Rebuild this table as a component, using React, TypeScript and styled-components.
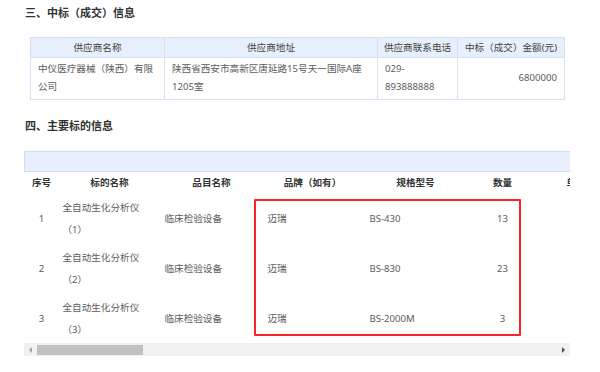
import React from "react"
import styled, { createGlobalStyle } from "styled-components"

const GlobalStyle = createGlobalStyle`
  body {
    margin: 0;
    background: #ffffff;
    font-family: "Noto Sans", "Noto Sans CJK SC", sans-serif;
  }
`

const Page = styled.div`
  width: 600px;
  height: 372px;
  overflow: hidden;
  padding: 5px 0 0 24px;
  box-sizing: border-box;
`

const SectionTitle: any = styled.h3`
  margin: ${(props: any) => props.top || 0}px 0 0 1px;
  font-size: 11px;
  line-height: 16px;
  font-weight: 700;
  color: #333333;
`

const Col: any = styled.col`
  width: ${(props: any) => props.w}px;
`

const InfoTable = styled.table`
  margin: 16px 0 0 6px;
  width: 534px;
  border-collapse: collapse;
  table-layout: fixed;
  font-size: 9.6px;
  color: #5c5c5c;

  th,
  td {
    border: 1px solid #d3e2f4;
    box-sizing: border-box;
  }

  th {
    height: 20px;
    padding: 0 4px;
    line-height: 18px;
    font-weight: 400;
    color: #444444;
    background: #e6effb;
    text-align: center;
    white-space: nowrap;
  }
`

const InfoCell: any = styled.td`
  height: 41px;
  padding: 2px 7px 3px;
  line-height: 18px;
  text-align: ${(props: any) => (props.right ? "right" : "left")};
  vertical-align: middle;
`

const ScrollArea = styled.div`
  position: relative;
  margin: 17px 0 0 0;
  width: 546px;
`

const Clip = styled.div`
  width: 546px;
  overflow: hidden;
`

const ItemTable = styled.table`
  width: 620px;
  border-collapse: collapse;
  table-layout: fixed;
  font-size: 9.6px;
  color: #5c5c5c;
`

const BlueBar = styled.td`
  height: 20px;
  padding: 0;
  background: #e6effb;
  border: 1px solid #cddff3;
  box-sizing: border-box;
`

const HeadCell = styled.th`
  height: 22px;
  padding: 0;
  font-weight: 700;
  color: #333333;
  text-align: center;
  white-space: nowrap;
  line-height: 16px;
`

const ItemCell: any = styled.td`
  height: 50px;
  padding: 0 4px 0 ${(props: any) => props.pl ?? 4}px;
  line-height: 22px;
  text-align: ${(props: any) => props.align || "left"};
  vertical-align: middle;
  box-sizing: border-box;
`

const Highlight = styled.div`
  position: absolute;
  left: 230px;
  top: 48px;
  width: 267px;
  height: 137px;
  border: 2px solid #ff2323;
  border-radius: 1px;
  box-sizing: border-box;
  pointer-events: none;
`

const ScrollBar = styled.div`
  display: flex;
  align-items: center;
  width: 546px;
  height: 13px;
  margin-top: -1px;
  background: #f1f1f1;
`

const Arrow: any = styled.div`
  flex: none;
  width: 13px;
  height: 13px;
  display: flex;
  align-items: center;
  justify-content: center;

  &::before {
    content: "";
    width: 0;
    height: 0;
    border-top: 3px solid transparent;
    border-bottom: 3px solid transparent;
    ${(props: any) =>
      props.dir === "left"
        ? "border-right: 3px solid #a3a3a3;"
        : "border-left: 3px solid #505050;"}
  }
`

const Track = styled.div`
  flex: 1;
  height: 13px;
  display: flex;
  align-items: center;
`

const Thumb = styled.div`
  width: 106px;
  height: 10px;
  background: #c1c1c1;
`

const items = [
  { no: 1, name: "全自动生化分析仪（1）", model: "BS-430", qty: 13 },
  { no: 2, name: "全自动生化分析仪（2）", model: "BS-830", qty: 23 },
  { no: 3, name: "全自动生化分析仪（3）", model: "BS-2000M", qty: 3 },
]

export default function App() {
  return (
    <Page>
      <GlobalStyle />
      <SectionTitle>三、中标（成交）信息</SectionTitle>
      <InfoTable>
        <colgroup>
          <Col w={134} />
          <Col w={213} />
          <Col w={80} />
          <Col w={107} />
        </colgroup>
        <thead>
          <tr>
            <th>供应商名称</th>
            <th>供应商地址</th>
            <th>供应商联系电话</th>
            <th>中标（成交）金额(元)</th>
          </tr>
        </thead>
        <tbody>
          <tr>
            <InfoCell>中仪医疗器械（陕西）有限公司</InfoCell>
            <InfoCell>
              陕西省西安市高新区唐延路15号天一国际A座
              <br />
              1205室
            </InfoCell>
            <InfoCell>
              029-
              <br />
              893888888
            </InfoCell>
            <InfoCell right>6800000</InfoCell>
          </tr>
        </tbody>
      </InfoTable>

      <SectionTitle top={18}>四、主要标的信息</SectionTitle>
      <ScrollArea>
        <Clip>
          <ItemTable>
            <colgroup>
              <Col w={34} />
              <Col w={102} />
              <Col w={102} />
              <Col w={100} />
              <Col w={106} />
              <Col w={68} />
              <Col w={108} />
            </colgroup>
            <thead>
              <tr>
                <BlueBar colSpan={7} />
              </tr>
              <tr>
                <HeadCell>序号</HeadCell>
                <HeadCell>标的名称</HeadCell>
                <HeadCell>品目名称</HeadCell>
                <HeadCell>品牌（如有）</HeadCell>
                <HeadCell>规格型号</HeadCell>
                <HeadCell>数量</HeadCell>
                <HeadCell>单价（元）</HeadCell>
              </tr>
            </thead>
            <tbody>
              {items.map(item => (
                <tr key={item.no}>
                  <ItemCell align="center">{item.no}</ItemCell>
                  <ItemCell>{item.name}</ItemCell>
                  <ItemCell>临床检验设备</ItemCell>
                  <ItemCell pl={5}>迈瑞</ItemCell>
                  <ItemCell pl={7}>{item.model}</ItemCell>
                  <ItemCell align="center">{item.qty}</ItemCell>
                  <ItemCell />
                </tr>
              ))}
            </tbody>
          </ItemTable>
        </Clip>
        <Highlight />
        <ScrollBar>
          <Arrow dir="left" />
          <Track>
            <Thumb />
          </Track>
          <Arrow dir="right" />
        </ScrollBar>
      </ScrollArea>
    </Page>
  )
}
